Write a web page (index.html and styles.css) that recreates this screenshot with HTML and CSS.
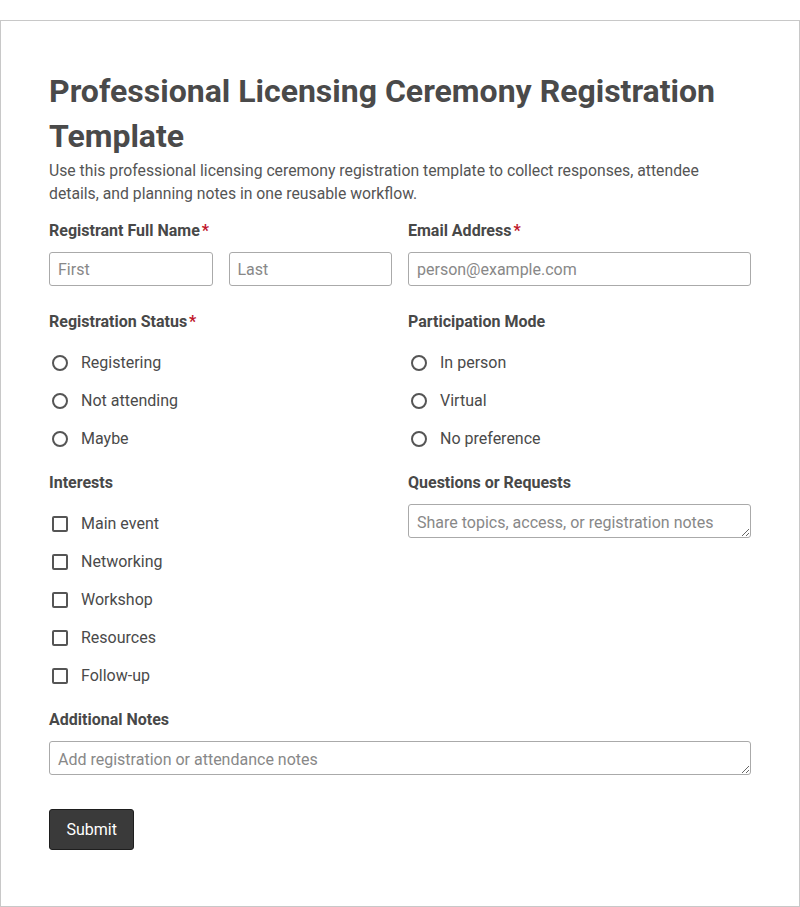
FILE: index.html
```html
<!DOCTYPE html>
<html lang="en">

<head>
    <meta charset="UTF-8">
    <meta name="viewport" content="width=device-width, initial-scale=1.0">
    <link rel="stylesheet" href="styles.css">
    <title>Professional Licensing Ceremony Registration Template</title>
</head>

<body>
    <div class="card">
        <h1 class="title">Professional Licensing Ceremony Registration Template</h1>
        <p class="intro">Use this professional licensing ceremony registration template to collect responses, attendee details, and planning notes in one reusable workflow.</p>

        <form class="form-grid">
            <!-- Name -->
            <div class="field">
                <label class="field-label">Registrant Full Name<span class="req">*</span></label>
                <div class="name-row">
                    <input type="text" class="text-input" placeholder="First">
                    <input type="text" class="text-input" placeholder="Last">
                </div>
            </div>

            <!-- Email -->
            <div class="field">
                <label class="field-label">Email Address<span class="req">*</span></label>
                <input type="email" class="text-input" placeholder="person@example.com">
            </div>

            <!-- Status -->
            <div class="field">
                <label class="field-label">Registration Status<span class="req">*</span></label>
                <div class="options">
                    <label class="option"><input type="radio" name="status" class="radio">Registering</label>
                    <label class="option"><input type="radio" name="status" class="radio">Not attending</label>
                    <label class="option"><input type="radio" name="status" class="radio">Maybe</label>
                </div>
            </div>

            <!-- Mode -->
            <div class="field">
                <label class="field-label">Participation Mode</label>
                <div class="options">
                    <label class="option"><input type="radio" name="mode" class="radio">In person</label>
                    <label class="option"><input type="radio" name="mode" class="radio">Virtual</label>
                    <label class="option"><input type="radio" name="mode" class="radio">No preference</label>
                </div>
            </div>

            <!-- Interests -->
            <div class="field">
                <label class="field-label">Interests</label>
                <div class="options">
                    <label class="option"><input type="checkbox" class="check">Main event</label>
                    <label class="option"><input type="checkbox" class="check">Networking</label>
                    <label class="option"><input type="checkbox" class="check">Workshop</label>
                    <label class="option"><input type="checkbox" class="check">Resources</label>
                    <label class="option"><input type="checkbox" class="check">Follow-up</label>
                </div>
            </div>

            <!-- Questions -->
            <div class="field">
                <label class="field-label">Questions or Requests</label>
                <textarea class="text-area" rows="1" placeholder="Share topics, access, or registration notes"></textarea>
            </div>

            <!-- Notes -->
            <div class="field full">
                <label class="field-label">Additional Notes</label>
                <textarea class="text-area" rows="1" placeholder="Add registration or attendance notes"></textarea>
            </div>

            <div class="actions full">
                <button type="button" class="submit-button">Submit</button>
            </div>
        </form>
    </div>
</body>
</html>
```

FILE: styles.css
```css
body {
    margin: 0;
    background-color: #fff;
    font-family: Roboto, "Liberation Sans", sans-serif;
    color: #4a4a4a;
}

.card {
    margin-top: 20px;
    border: 1px solid #c8c8c8;
    padding: 48px 48px 56px 48px;
}

.title {
    font-size: 32px;
    line-height: 45px;
    font-weight: 700;
    color: #4a4a4a;
    margin: 0;
}

.intro {
    font-size: 15.75px;
    line-height: 23px;
    color: #555;
    margin: 0 0 14px 0;
}

.form-grid {
    display: grid;
    grid-template-columns: 1fr 1fr;
    column-gap: 16px;
    row-gap: 14px;
}

.full {
    grid-column: 1 / 3;
}

.field {
    display: flex;
    flex-direction: column;
}

.field-label {
    font-size: 16px;
    line-height: 22px;
    font-weight: 700;
    color: #484848;
    padding-top: 1px;
    margin-bottom: 10px;
}

.req {
    color: #c0152a;
    margin-left: 2px;
}

.name-row {
    display: flex;
    gap: 16px;
}

.text-input,
.text-area {
    box-sizing: border-box;
    width: 100%;
    height: 34px;
    padding: 6px 8px;
    border: 1px solid #aaa;
    border-radius: 3px;
    font-family: Roboto, "Liberation Sans", sans-serif;
    font-size: 16px;
    color: #444;
    outline: none;
}

.text-input {
    margin-bottom: 10px;
}

.text-area {
    padding-top: 8px;
    padding-bottom: 4px;
    line-height: 20px;
    resize: vertical;
}

.text-input::placeholder,
.text-area::placeholder {
    color: #888;
}

.options {
    display: flex;
    flex-direction: column;
}

.option {
    display: flex;
    align-items: center;
    padding: 9px 0 7px 0;
    font-size: 16px;
    line-height: 22px;
    color: #4a4a4a;
}

.radio,
.check {
    appearance: none;
    -webkit-appearance: none;
    box-sizing: border-box;
    width: 16px;
    height: 16px;
    margin: 0 13px 0 3px;
    border: 2px solid #555;
    background: #fff;
}

.radio {
    border-radius: 50%;
}

.check {
    border-radius: 2px;
}

.actions {
    padding-top: 20px;
}

.submit-button {
    background-color: #3a3a3a;
    color: #fff;
    padding: 9px 16.5px;
    border: 1px solid #1e1e1e;
    border-radius: 3px;
    font-family: Roboto, "Liberation Sans", sans-serif;
    font-size: 16px;
    line-height: 21px;
    cursor: pointer;
}
```
